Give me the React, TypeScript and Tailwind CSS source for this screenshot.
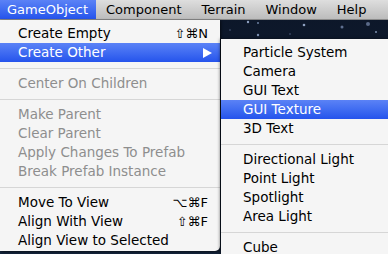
import React from "react";

const font = { fontFamily: '"DejaVu Sans", "Liberation Sans", sans-serif' };

type Item =
  | { sep: true }
  | { label: string; disabled?: boolean; shortcut?: string; active?: boolean; submenu?: boolean };

const mainItems: Item[] = [
  { label: "Create Empty", shortcut: "⇧⌘N" },
  { label: "Create Other", active: true, submenu: true },
  { sep: true },
  { label: "Center On Children", disabled: true },
  { sep: true },
  { label: "Make Parent", disabled: true },
  { label: "Clear Parent", disabled: true },
  { label: "Apply Changes To Prefab", disabled: true },
  { label: "Break Prefab Instance", disabled: true },
  { sep: true },
  { label: "Move To View", shortcut: "⌥⌘F" },
  { label: "Align With View", shortcut: "⇧⌘F" },
  { label: "Align View to Selected" },
];

const subItems: Item[] = [
  { label: "Particle System" },
  { label: "Camera" },
  { label: "GUI Text" },
  { label: "GUI Texture", active: true },
  { label: "3D Text" },
  { sep: true },
  { label: "Directional Light" },
  { label: "Point Light" },
  { label: "Spotlight" },
  { label: "Area Light" },
  { sep: true },
  { label: "Cube" },
];

function Rows({ items, pl }: { items: Item[]; pl: string }) {
  return (
    <>
      {items.map((it, i) => {
        if ("sep" in it) {
          return (
            <div key={i} className="pt-[6px] pb-[5px]">
              <div className="h-px w-full bg-[#d6d6d6]" />
            </div>
          );
        }
        const cls = it.active
          ? "bg-gradient-to-b from-[#5b82f6] to-[#2553ec] text-white"
          : it.disabled
          ? "text-[#8e8e8e]"
          : "text-black";
        return (
          <div key={i} className={`h-[19px] flex items-center justify-between ${pl} ${cls}`}>
            <span className="text-[13.5px] leading-none whitespace-nowrap">{it.label}</span>
            {it.shortcut && (
              <span className="text-[13px] leading-none pr-[12px] whitespace-nowrap">{it.shortcut}</span>
            )}
            {it.submenu && (
              <svg width="9" height="10" viewBox="0 0 9 10" className="mr-[8px]">
                <polygon points="0,0 9,5 0,10" fill="#ffffff" />
              </svg>
            )}
          </div>
        );
      })}
    </>
  );
}

export default function App() {
  const bar = ["Component", "Terrain", "Window", "Help"];
  return (
    <div
      className="relative w-[388px] h-[254px] overflow-hidden bg-gradient-to-b from-[#0c1628] to-[#14243c]"
      style={font}
    >
      <svg className="absolute left-0 top-0" width="388" height="254">
        <circle cx="248" cy="22" r="1.2" fill="#8ea0c0" />
        <circle cx="258" cy="23" r="1" fill="#6d80a0" />
        <circle cx="258" cy="35" r="1.2" fill="#7c90b0" />
        <circle cx="304" cy="25" r="1.3" fill="#8ea0c0" />
        <circle cx="342" cy="27" r="1.5" fill="#5f7090" />
        <circle cx="368" cy="24" r="2" fill="#5a6a88" />
        <circle cx="376" cy="32" r="1" fill="#7c90b0" />
        <circle cx="290" cy="34" r="0.8" fill="#506080" />
        <circle cx="230" cy="30" r="0.8" fill="#506080" />
      </svg>

      <div className="relative flex h-[20px] items-stretch bg-gradient-to-b from-[#dedede] to-[#bcbcbc] border-b border-[#8a8a8a] text-[13px] text-black">
        <div className="flex items-center pl-[7px] pr-[8px] bg-gradient-to-b from-[#5b82f6] to-[#2553ec] text-white">
          GameObject
        </div>
        {bar.map((b) => (
          <div key={b} className="flex items-center px-[10px]">
            {b}
          </div>
        ))}
      </div>

      <div className="absolute left-0 top-[20px] w-[220px] h-[231px] pt-[4px] bg-[#f5f5f5] rounded-br-[5px] shadow-[1px_1px_3px_rgba(0,0,0,0.6)]">
        <Rows items={mainItems} pl="pl-[18px]" />
      </div>

      <div className="absolute left-[221px] right-0 top-[39px] h-[230px] pt-[4px] bg-[#f5f5f5] shadow-[-1px_0_3px_rgba(0,0,0,0.5)]">
        <Rows items={subItems} pl="pl-[22px]" />
      </div>
    </div>
  );
}
